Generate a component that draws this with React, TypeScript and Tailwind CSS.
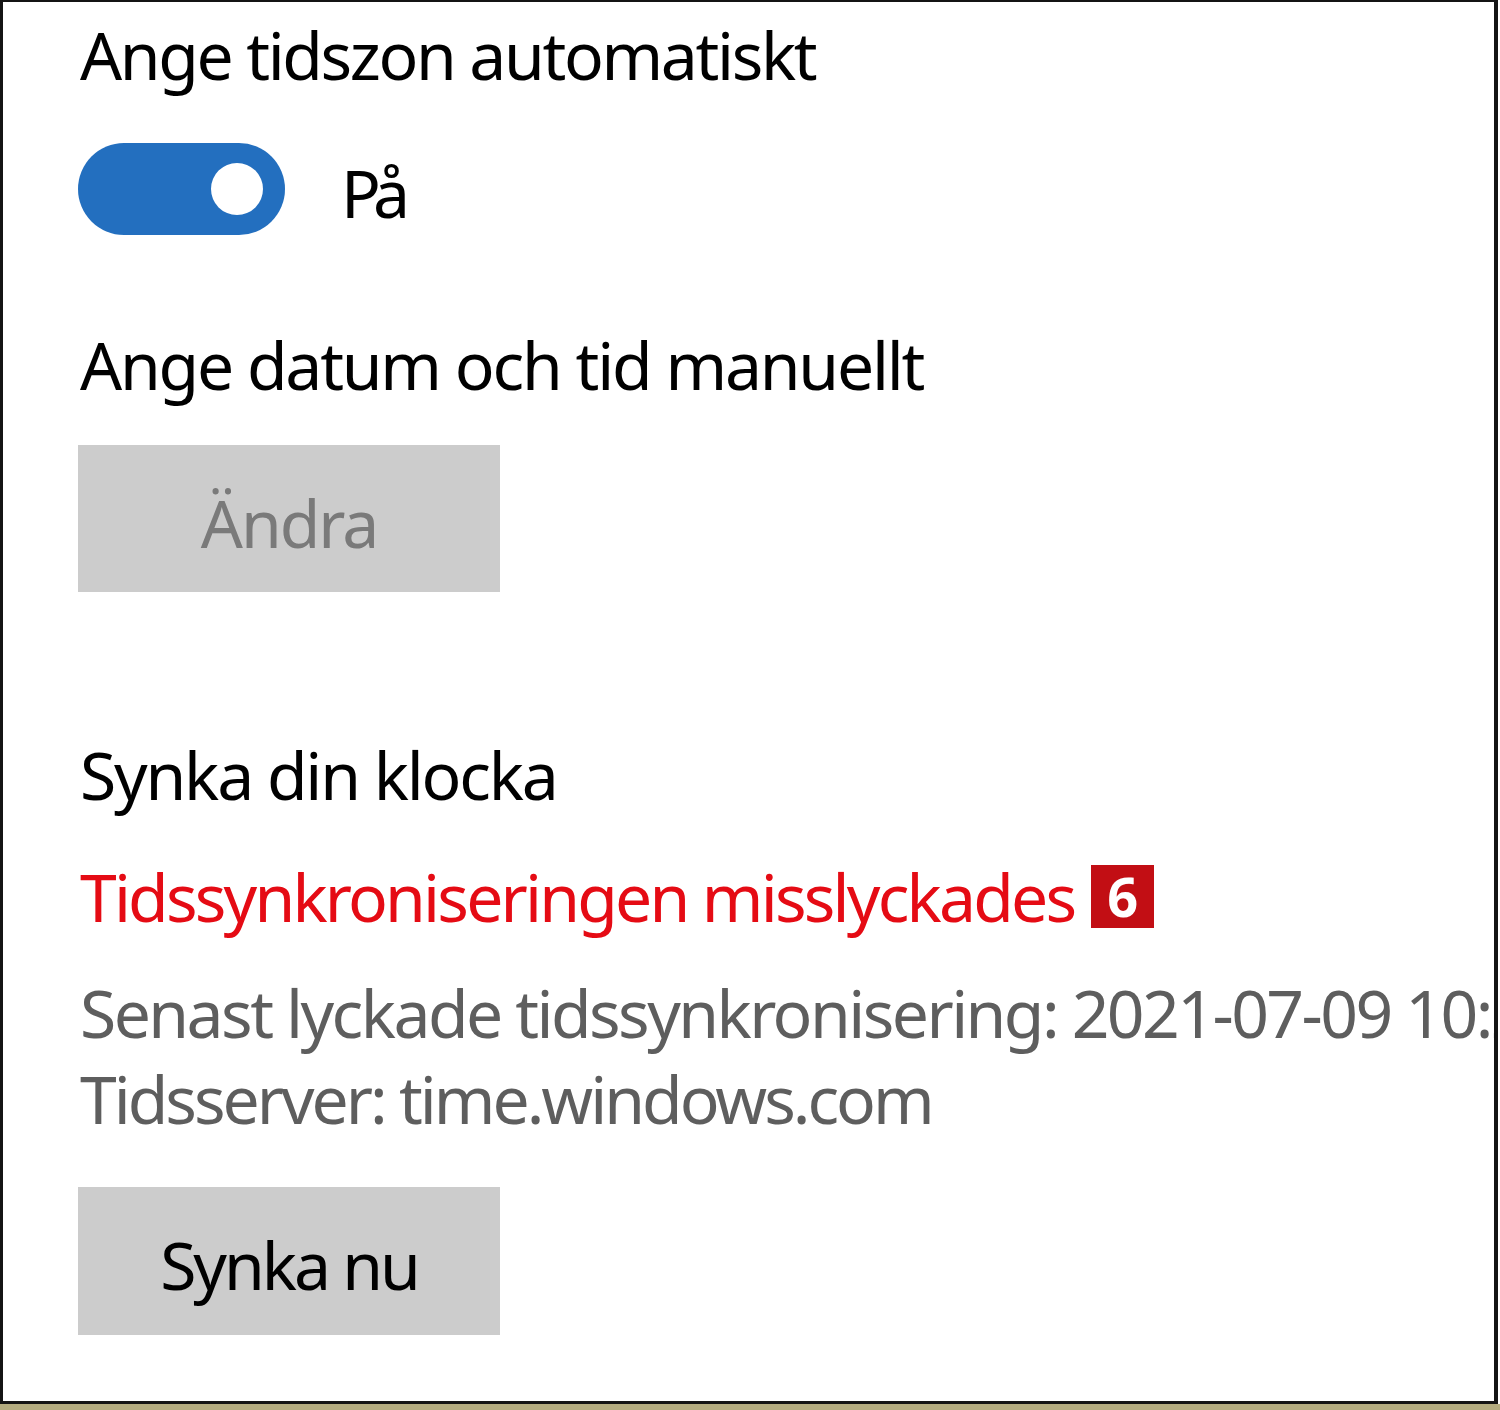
import React from "react";

export default function App() {
  return (
    <div className="w-[1500px] h-[1410px] bg-white flex flex-col font-['Noto_Sans',sans-serif]">
      <div className="w-[1498px] h-[1404px] bg-white border-t-2 border-l-[3px] border-r-[4px] border-b-[3px] border-[#141414] overflow-hidden pl-[75px] pt-[19px] flex flex-col whitespace-nowrap">
        <div className="pl-[2px] text-[66px] leading-[66px] h-[66px] text-black tracking-[-2.35px]">Ange tidszon automatiskt</div>

        <div className="mt-[56px] h-[92px] flex items-center">
          <div className="w-[207px] h-[92px] rounded-full bg-[#236fbf] flex items-center justify-end pr-[22px]">
            <div className="w-[52px] h-[52px] rounded-full bg-white" />
          </div>
          <div className="ml-[56px] mt-[6px] text-[66px] leading-[66px] text-black tracking-[-8px]">På</div>
        </div>

        <div className="mt-[96px] pl-[2px] text-[66px] leading-[66px] h-[66px] text-black tracking-[-2.2px]">Ange datum och tid manuellt</div>

        <div className="mt-[48px] w-[422px] h-[147px] bg-[#cccccc] flex items-center justify-center pt-[6px]">
          <span className="text-[66px] leading-[66px] text-[#7a7a7a] tracking-[-2px]">Ändra</span>
        </div>

        <div className="mt-[149px] pl-[2px] text-[66px] leading-[66px] h-[66px] text-black tracking-[-2.2px]">Synka din klocka</div>

        <div className="mt-[56px] pl-[2px] h-[66px] flex items-center">
          <span className="text-[66px] leading-[66px] text-[#e50b14] tracking-[-2.8px]">Tidssynkroniseringen misslyckades</span>
          <span className="ml-[17px] w-[63px] h-[63px] bg-[#c20e14] flex items-center justify-center text-white font-bold text-[54px] leading-none">6</span>
        </div>

        <div className="mt-[40px] pl-[2px] text-[66px] leading-[86px] text-[#5e5e5e]">
          <div className="tracking-[-2.55px]">Senast lyckade tidssynkronisering: 2021-07-09 10:23:40</div>
          <div className="tracking-[-3px]">Tidsserver: time.windows.com</div>
        </div>

        <div className="mt-[46px] w-[422px] h-[148px] bg-[#cccccc] flex items-center justify-center pt-[6px]">
          <span className="text-[66px] leading-[66px] text-black tracking-[-3px]">Synka nu</span>
        </div>
      </div>
      <div className="w-[1500px] h-[6px] bg-[#b4ac7f]" />
    </div>
  );
}
